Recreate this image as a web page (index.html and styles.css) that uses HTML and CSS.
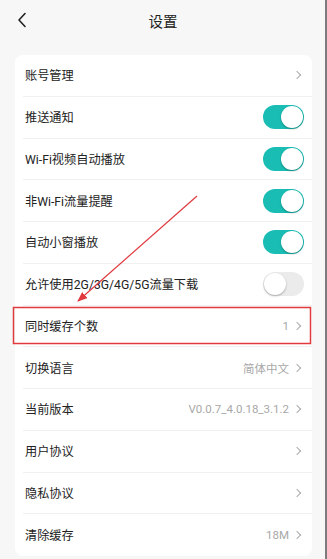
FILE: index.html
```html
<!DOCTYPE html>
<html lang="zh">
<head>
  <meta charset="UTF-8" />
  <meta name="viewport" content="width=device-width, initial-scale=1.0" />
  <title>设置</title>
  <link rel="stylesheet" href="styles.css">
</head>
<body>
  <div class="page">
    <header class="topbar">
      <svg class="back" width="10" height="16" viewBox="0 0 10 16">
        <path d="M8 1.5 L2 8 L8 14.5" fill="none" stroke="#222" stroke-width="1.6" stroke-linecap="round" stroke-linejoin="round"/>
      </svg>
      <h1>设置</h1>
      <span class="spacer"></span>
    </header>

    <div class="card">
      <div class="row"><span class="label">账号管理</span><span class="right"><i class="chev"></i></span></div>
      <div class="row"><span class="label">推送通知</span><span class="switch on"></span></div>
      <div class="row"><span class="label">Wi-Fi视频自动播放</span><span class="switch on"></span></div>
      <div class="row"><span class="label">非Wi-Fi流量提醒</span><span class="switch on"></span></div>
      <div class="row"><span class="label">自动小窗播放</span><span class="switch on"></span></div>
      <div class="row"><span class="label">允许使用2G/3G/4G/5G流量下载</span><span class="switch"></span></div>
      <div class="row"><span class="label">同时缓存个数</span><span class="right"><span class="value">1</span><i class="chev"></i></span></div>
      <div class="row"><span class="label">切换语言</span><span class="right"><span class="value">简体中文</span><i class="chev"></i></span></div>
      <div class="row"><span class="label">当前版本</span><span class="right"><span class="value">V0.0.7_4.0.18_3.1.2</span><i class="chev"></i></span></div>
      <div class="row"><span class="label">用户协议</span><span class="right"><i class="chev"></i></span></div>
      <div class="row"><span class="label">隐私协议</span><span class="right"><i class="chev"></i></span></div>
      <div class="row last"><span class="label">清除缓存</span><span class="right"><span class="value">18M</span><i class="chev"></i></span></div>
    </div>

    <!-- annotation drawn over the screenshot -->
    <svg class="markup" width="327" height="559" viewBox="0 0 327 559">
      <defs>
        <marker id="head" markerWidth="10" markerHeight="8" refX="9" refY="4" orient="auto" markerUnits="userSpaceOnUse">
          <path d="M0 0 L10 4 L0 8 Z" fill="#e0393e"/>
        </marker>
      </defs>
      <line x1="197" y1="196" x2="78" y2="301" stroke="#e0393e" stroke-width="1.2" marker-end="url(#head)"/>
      <rect x="13.5" y="307.5" width="297" height="36" fill="none" stroke="#e0393e" stroke-width="1.5"/>
    </svg>
  </div>
</body>
</html>
```

FILE: styles.css
```css
body {
  margin: 0;
  font-family: Roboto, "Noto Sans CJK SC", sans-serif;
  background: #f7f7f7;
}
.page {
  position: relative;
  width: 327px;
  height: 559px;
  box-sizing: border-box;
  border-right: 2px solid #7c7c7c;
  overflow: hidden;
}
.topbar {
  height: 40px;
  display: flex;
  align-items: center;
  padding: 0 16px 0 17px;
}
.topbar h1 {
  flex: 1;
  margin: 0;
  text-align: center;
  font-size: 14.5px;
  font-weight: normal;
  color: #222;
}
.back, .spacer {
  width: 10px;
  flex-shrink: 0;
}
.card {
  margin: 15px 13px 0 15px;
  background: #fff;
  border-radius: 8px;
  overflow: hidden;
}
.row {
  height: 41.75px;
  box-sizing: border-box;
  margin-left: 8px;
  padding: 0 10px 0 2px;
  display: flex;
  align-items: center;
  justify-content: space-between;
  border-bottom: 1px solid #f0f0f0;
}
.row.last {
  border-bottom: none;
}
.label {
  font-size: 12.2px;
  color: #222;
}
.right {
  display: flex;
  align-items: center;
  gap: 5px;
}
.value {
  font-size: 11.5px;
  color: #a8a8a8;
}
.chev {
  width: 5px;
  height: 5px;
  border-top: 1px solid #ababab;
  border-right: 1px solid #ababab;
  transform: rotate(45deg);
  margin-right: 2px;
}
.switch {
  position: relative;
  width: 41px;
  height: 24px;
  border-radius: 12px;
  background: #ebebeb;
  margin-right: -2px;
}
.switch::after {
  content: "";
  position: absolute;
  top: 1px;
  left: 1px;
  width: 22px;
  height: 22px;
  border-radius: 50%;
  background: #fff;
  box-shadow: 0 1px 2px rgba(0, 0, 0, 0.3);
}
.switch.on {
  background: #19bdb4;
}
.switch.on::after {
  left: 18px;
}
.markup {
  position: absolute;
  left: 0;
  top: 0;
  pointer-events: none;
}
```
